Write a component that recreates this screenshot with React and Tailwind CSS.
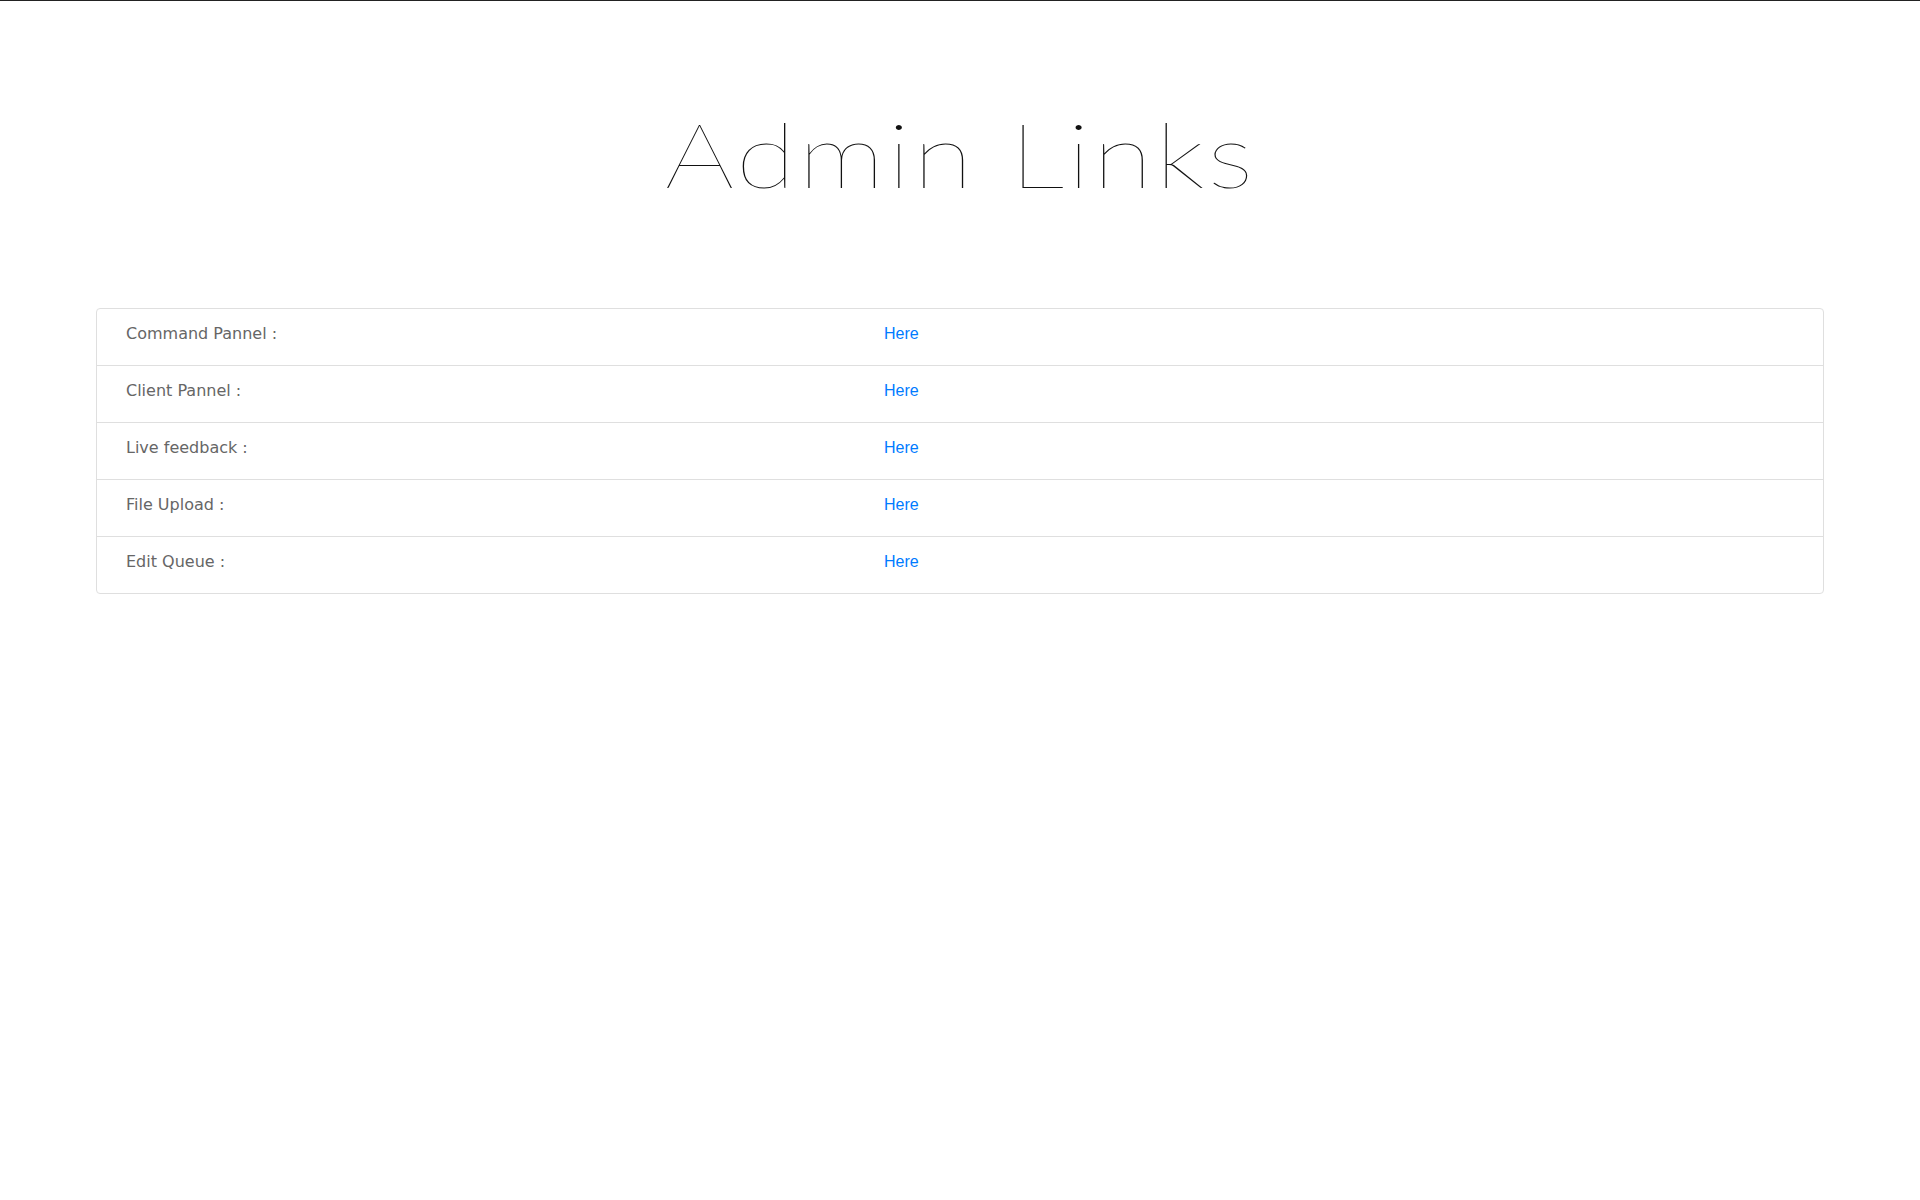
const LINKS = [
  { label: 'Command Pannel :', href: '#command' },
  { label: 'Client Pannel :', href: '#client' },
  { label: 'Live feedback :', href: '#feedback' },
  { label: 'File Upload :', href: '#upload' },
  { label: 'Edit Queue :', href: '#queue' },
]

export default function App() {
  return (
    <div className="min-h-screen bg-white border-t border-[#222]">
      <div className="mt-[97px] flex justify-center">
        <h1
          className="scale-x-[1.2] text-[91px] leading-[1.2] font-extralight tracking-[2.5px] text-[#111]"
          style={{ fontFamily: 'Lato, "DejaVu Sans", sans-serif' }}
        >
          Admin Links
        </h1>
      </div>

      <div className="mx-auto mt-[101px] w-[90%] rounded-[4px] border border-[#dfdfdf]">
        {LINKS.map((link, i) => (
          <div
            key={link.label}
            className={`flex items-start pt-[13px] pb-[19px] ${i > 0 ? 'border-t border-[#dfdfdf]' : ''}`}
          >
            <div
              className="w-[787px] shrink-0 pl-[29px] text-[16px] leading-[24px] text-[#666]"
              style={{ fontFamily: '"DejaVu Sans", sans-serif' }}
            >
              {link.label}
            </div>
            <a
              href={link.href}
              className="text-[16px] leading-[24px] text-[#007bff]"
              style={{ fontFamily: '"Liberation Sans", Arial, sans-serif' }}
            >
              Here
            </a>
          </div>
        ))}
      </div>
    </div>
  )
}
